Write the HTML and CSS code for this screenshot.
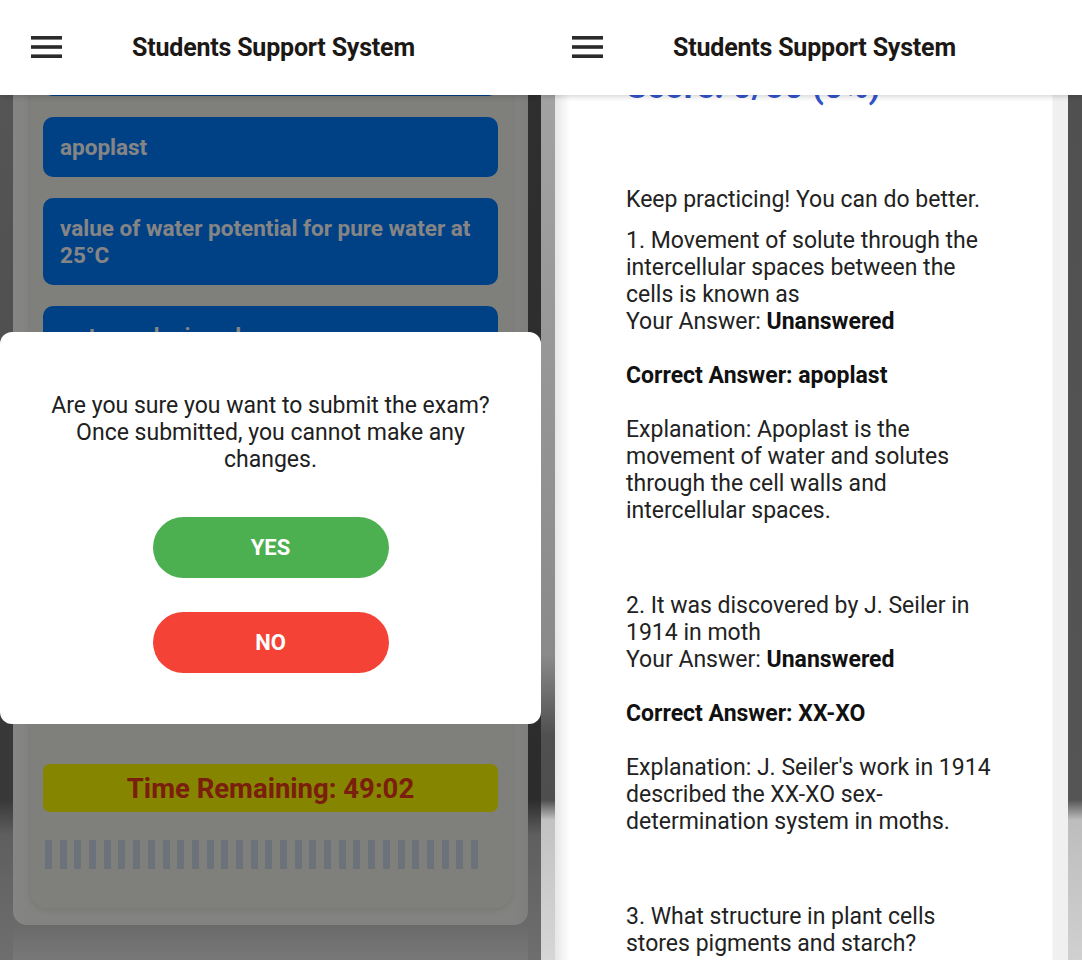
FILE: index.html
```html
<!DOCTYPE html>
<html lang="en">
<head>
<meta charset="utf-8">
<title>Students Support System</title>
<link rel="stylesheet" href="styles.css">
</head>
<body>
<div class="screens">
  <section class="phone">
    <header class="appbar">
      <svg class="menu-icon" width="31" height="22" viewBox="0 0 31 22" aria-hidden="true">
        <rect x="0" y="0" width="31" height="3.6" fill="#2b2b2b"/>
        <rect x="0" y="9.2" width="31" height="3.6" fill="#2b2b2b"/>
        <rect x="0" y="18.4" width="31" height="3.6" fill="#2b2b2b"/>
      </svg>
      <h1 class="appbar-title">Students Support System</h1>
    </header>
    <main class="exam-body">
      <div class="exam-shell">
        <div class="exam-card">
          <div class="options">
            <button class="option">plasmolysis</button>
            <button class="option">apoplast</button>
            <button class="option">value of water potential for pure water at 25°C</button>
            <button class="option">water and minerals</button>
            <button class="option">symplast</button>
            <button class="option">turgor pressure</button>
          </div>
          <div class="nav-row">
            <button class="nav-btn">Previous</button>
            <button class="nav-btn">Next</button>
          </div>
          <div class="timer">Time Remaining: 49:02</div>
          <div class="ticks">
            <span></span><span></span><span></span><span></span><span></span><span></span>
            <span></span><span></span><span></span><span></span><span></span><span></span>
            <span></span><span></span><span></span><span></span><span></span><span></span>
            <span></span><span></span><span></span><span></span><span></span><span></span>
            <span></span><span></span><span></span><span></span><span></span><span></span>
          </div>
        </div>
      </div>
      <div class="backdrop">
        <div class="dialog">
          <p class="dialog-text">Are you sure you want to submit the exam? Once submitted, you cannot make any changes.</p>
          <button class="pill pill-yes">YES</button>
          <button class="pill pill-no">NO</button>
        </div>
      </div>
    </main>
  </section>

  <section class="phone">
    <header class="appbar">
      <svg class="menu-icon" width="31" height="22" viewBox="0 0 31 22" aria-hidden="true">
        <rect x="0" y="0" width="31" height="3.6" fill="#2b2b2b"/>
        <rect x="0" y="9.2" width="31" height="3.6" fill="#2b2b2b"/>
        <rect x="0" y="18.4" width="31" height="3.6" fill="#2b2b2b"/>
      </svg>
      <h1 class="appbar-title">Students Support System</h1>
    </header>
    <main class="result-body">
      <div class="result-card">
        <h2 class="score">Score: 0/50 (0%)</h2>
        <p class="feedback">Keep practicing! You can do better.</p>
        <div class="question">1. Movement of solute through the intercellular spaces between the cells is known as<br>Your Answer: <strong>Unanswered</strong><br><br><strong>Correct Answer: apoplast</strong><br><br>Explanation: Apoplast is the movement of water and solutes through the cell walls and intercellular spaces.</div>
        <div class="question">2. It was discovered by J. Seiler in 1914 in moth<br>Your Answer: <strong>Unanswered</strong><br><br><strong>Correct Answer: XX-XO</strong><br><br>Explanation: J. Seiler's work in 1914 described the XX-XO sex-determination system in moths.</div>
        <div class="question">3. What structure in plant cells stores pigments and starch?<br>Your Answer: <strong>Unanswered</strong></div>
      </div>
    </main>
  </section>
</div>
</body>
</html>
```

FILE: styles.css
```css
* { box-sizing: border-box; }

html, body {
  margin: 0;
  padding: 0;
  background: #ffffff;
}

body {
  font-family: Roboto, "Liberation Sans", Arial, sans-serif;
  color: #222222;
}

.screens {
  display: flex;
  width: 1082px;
  height: 960px;
  overflow: hidden;
}

.phone {
  width: 541px;
  height: 960px;
  display: flex;
  flex-direction: column;
  overflow: hidden;
  position: relative;
}

/* ---------- App bar ---------- */
.appbar {
  height: 95px;
  flex: 0 0 95px;
  background: #ffffff;
  display: flex;
  align-items: center;
  padding-left: 31px;
  position: relative;
  z-index: 5;
  box-shadow: 0 2px 5px rgba(0, 0, 0, 0.16);
}

.menu-icon {
  display: block;
  margin-top: -2px;
}

.appbar-title {
  margin: 0 0 0 70px;
  font-size: 25px;
  font-weight: 700;
  color: #1c1816;
  letter-spacing: -0.2px;
}

/* ---------- Exam screen (left) ---------- */
.exam-body {
  flex: 1;
  position: relative;
  overflow: hidden;
  background:
    linear-gradient(to bottom, #a4a4a4 0, #8c8c8c 560px, #6c6c6c 610px, #6c6c6c 705px, #b6b6b6 740px, #d4d4d4 100%) left top / 13px 100% no-repeat,
    linear-gradient(to bottom, #5a5a5a 0, #555555 705px, #b6b6b6 740px, #d4d4d4 100%) right top / 13px 100% no-repeat,
    linear-gradient(to bottom, #c8c8c8 0, #cccccc 830px, #e6e6e6 100%);
}

.exam-shell {
  margin: -80px 13px 0 13px;
  padding: 0 16px 17px 17px;
  background: linear-gradient(to right, #ffffff 0, #fbfbf7 17px, #fbfbf7 calc(100% - 16px), #f2f2f0 100%);
  border-radius: 0 0 14px 14px;
}

.exam-card {
  background: #f3f3ec;
  border-radius: 16px;
  padding: 21px 14px 39px 13px;
  box-shadow: 0 2px 6px rgba(0, 0, 0, 0.10);
}

.options {
  display: flex;
  flex-direction: column;
  gap: 21px;
}

.option {
  display: block;
  width: 100%;
  border: none;
  background: #007bff;
  color: #ffffff;
  font-family: Roboto, "Liberation Sans", Arial, sans-serif;
  font-size: 22.5px;
  font-weight: 700;
  line-height: 27px;
  text-align: left;
  padding: 16.5px 8px 16.5px 17px;
  border-radius: 10px;
}

.nav-row {
  display: flex;
  gap: 21px;
  margin-top: 21px;
}

.nav-btn {
  flex: 1;
  height: 48px;
  border: none;
  border-radius: 8px;
  background: #6c757d;
  color: #ffffff;
  font-family: Roboto, "Liberation Sans", Arial, sans-serif;
  font-size: 20px;
  font-weight: 700;
}

.timer {
  margin-top: 167px;
  height: 48px;
  background: #ffff00;
  border-radius: 7px;
  display: flex;
  align-items: center;
  justify-content: center;
  color: #ea3a1c;
  font-size: 27.5px;
  font-weight: 700;
}

.ticks {
  margin: 28px 20px 0 2px;
  height: 29px;
  display: flex;
  justify-content: space-between;
}

.ticks span {
  width: 7px;
  height: 29px;
  background: #d0dbea;
}

/* ---------- Confirmation dialog ---------- */
.backdrop {
  position: absolute;
  inset: 0;
  background: rgba(0, 0, 0, 0.48);
  display: flex;
  align-items: center;
  justify-content: center;
  z-index: 3;
}

.dialog {
  width: 541px;
  background: #ffffff;
  border-radius: 12px;
  padding: 60px 40px 51px;
  display: flex;
  flex-direction: column;
  align-items: center;
}

.dialog-text {
  margin: 0 0 44px;
  font-size: 23px;
  line-height: 27px;
  text-align: center;
  color: #202020;
}

.pill {
  width: 236px;
  height: 61px;
  border: none;
  border-radius: 31px;
  color: #ffffff;
  font-family: Roboto, "Liberation Sans", Arial, sans-serif;
  font-size: 22px;
  font-weight: 700;
}

.pill-yes { background: #4caf50; }

.pill-no {
  background: #f44336;
  margin-top: 34px;
}

/* ---------- Results screen (right) ---------- */
.result-body {
  flex: 1;
  overflow: hidden;
  padding: 0 14px;
  background:
    linear-gradient(to bottom, #a2a2a2 0, #8a8a8a 560px, #505050 640px, #4e4e4e 705px, #c2c2c2 725px, #d6d6d6 100%) left top / 14px 100% no-repeat,
    linear-gradient(to bottom, #505050 0, #555555 705px, #bdbdbd 725px, #d0d0d0 100%) right top / 14px 100% no-repeat,
    #ffffff;
}

.result-card {
  margin-top: -42px;
  padding: 14px 67px 0 71px;
  min-height: 1200px;
  background: linear-gradient(to right, #e6e6e6 0, #ffffff 15px, #ffffff calc(100% - 16px), #f0f0f0 calc(100% - 15px), #f0f0f0 100%);
}

.score {
  margin: 0 0 81px;
  font-size: 34px;
  line-height: 38px;
  font-weight: 700;
  color: #3355cc;
}

.feedback {
  margin: 0 0 14px;
  font-size: 23px;
  line-height: 27px;
}

.question {
  margin: 0 0 68px;
  font-size: 23px;
  line-height: 27px;
}

.question strong {
  font-weight: 700;
  color: #111111;
}
```
